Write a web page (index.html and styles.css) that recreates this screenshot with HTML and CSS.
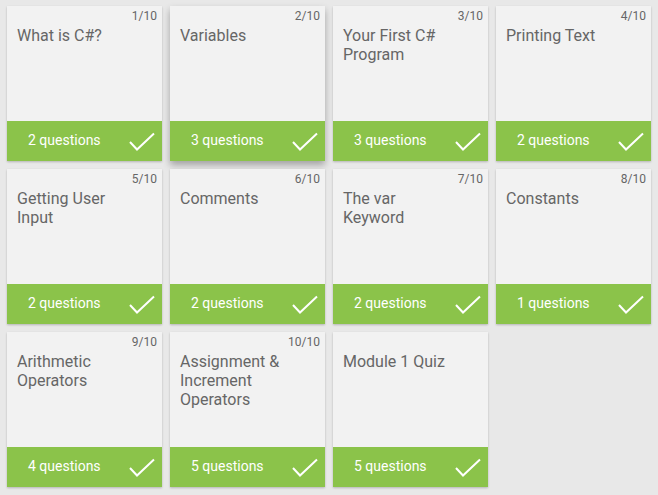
FILE: index.html
```html
<!DOCTYPE html>
<html>
<head>
<meta charset="utf-8">
<link rel="stylesheet" href="styles.css">
</head>
<body>
<div class="grid">
  <div class="card">
    <div class="top"><div class="num">1/10</div><div class="title">What is C#?</div></div>
    <div class="bar"><span>2 questions</span><svg class="check" width="30" height="22" viewBox="0 0 30 22"><path d="M3 11 L10 18.5 L27 2.5" fill="none" stroke="#fff" stroke-width="2"/></svg></div>
  </div>
  <div class="card raised">
    <div class="top"><div class="num">2/10</div><div class="title">Variables</div></div>
    <div class="bar"><span>3 questions</span><svg class="check" width="30" height="22" viewBox="0 0 30 22"><path d="M3 11 L10 18.5 L27 2.5" fill="none" stroke="#fff" stroke-width="2"/></svg></div>
  </div>
  <div class="card">
    <div class="top"><div class="num">3/10</div><div class="title">Your First C# Program</div></div>
    <div class="bar"><span>3 questions</span><svg class="check" width="30" height="22" viewBox="0 0 30 22"><path d="M3 11 L10 18.5 L27 2.5" fill="none" stroke="#fff" stroke-width="2"/></svg></div>
  </div>
  <div class="card">
    <div class="top"><div class="num">4/10</div><div class="title">Printing Text</div></div>
    <div class="bar"><span>2 questions</span><svg class="check" width="30" height="22" viewBox="0 0 30 22"><path d="M3 11 L10 18.5 L27 2.5" fill="none" stroke="#fff" stroke-width="2"/></svg></div>
  </div>
  <div class="card">
    <div class="top"><div class="num">5/10</div><div class="title">Getting User Input</div></div>
    <div class="bar"><span>2 questions</span><svg class="check" width="30" height="22" viewBox="0 0 30 22"><path d="M3 11 L10 18.5 L27 2.5" fill="none" stroke="#fff" stroke-width="2"/></svg></div>
  </div>
  <div class="card">
    <div class="top"><div class="num">6/10</div><div class="title">Comments</div></div>
    <div class="bar"><span>2 questions</span><svg class="check" width="30" height="22" viewBox="0 0 30 22"><path d="M3 11 L10 18.5 L27 2.5" fill="none" stroke="#fff" stroke-width="2"/></svg></div>
  </div>
  <div class="card">
    <div class="top"><div class="num">7/10</div><div class="title">The var Keyword</div></div>
    <div class="bar"><span>2 questions</span><svg class="check" width="30" height="22" viewBox="0 0 30 22"><path d="M3 11 L10 18.5 L27 2.5" fill="none" stroke="#fff" stroke-width="2"/></svg></div>
  </div>
  <div class="card">
    <div class="top"><div class="num">8/10</div><div class="title">Constants</div></div>
    <div class="bar"><span>1 questions</span><svg class="check" width="30" height="22" viewBox="0 0 30 22"><path d="M3 11 L10 18.5 L27 2.5" fill="none" stroke="#fff" stroke-width="2"/></svg></div>
  </div>
  <div class="card">
    <div class="top"><div class="num">9/10</div><div class="title">Arithmetic Operators</div></div>
    <div class="bar"><span>4 questions</span><svg class="check" width="30" height="22" viewBox="0 0 30 22"><path d="M3 11 L10 18.5 L27 2.5" fill="none" stroke="#fff" stroke-width="2"/></svg></div>
  </div>
  <div class="card">
    <div class="top"><div class="num">10/10</div><div class="title">Assignment &amp; Increment Operators</div></div>
    <div class="bar"><span>5 questions</span><svg class="check" width="30" height="22" viewBox="0 0 30 22"><path d="M3 11 L10 18.5 L27 2.5" fill="none" stroke="#fff" stroke-width="2"/></svg></div>
  </div>
  <div class="card">
    <div class="top"><div class="num"></div><div class="title">Module 1 Quiz</div></div>
    <div class="bar"><span>5 questions</span><svg class="check" width="30" height="22" viewBox="0 0 30 22"><path d="M3 11 L10 18.5 L27 2.5" fill="none" stroke="#fff" stroke-width="2"/></svg></div>
  </div>
</div>
</body>
</html>
```
FILE: styles.css
```css
html, body {
  margin: 0;
  padding: 0;
  background: #e8e8e8;
}
body {
  padding: 6px 7px;
  font-family: Roboto, "Liberation Sans", sans-serif;
}
.grid {
  display: grid;
  grid-template-columns: repeat(4, 155px);
  grid-auto-rows: 155px;
  gap: 8px;
}
.card {
  display: flex;
  flex-direction: column;
  background: #f2f2f2;
  box-shadow: 0 1px 2px rgba(0,0,0,0.22);
}
.card.raised {
  box-shadow: 0 4px 7px rgba(0,0,0,0.3);
}
.top {
  flex: 1;
  padding: 3px 5px 0 10px;
}
.num {
  height: 14px;
  font-size: 12px;
  line-height: 14px;
  color: #666;
  text-align: right;
}
.title {
  margin-top: 3px;
  font-size: 16px;
  line-height: 19px;
  color: #666;
  max-width: 114px;
}
.bar {
  height: 40px;
  background: #8bc34a;
  display: flex;
  align-items: center;
  justify-content: space-between;
  padding: 0 5px 2px 21px;
  box-sizing: border-box;
  color: #fff;
  font-size: 14px;
}
.check {
  display: block;
  margin-top: 4px;
}
```
